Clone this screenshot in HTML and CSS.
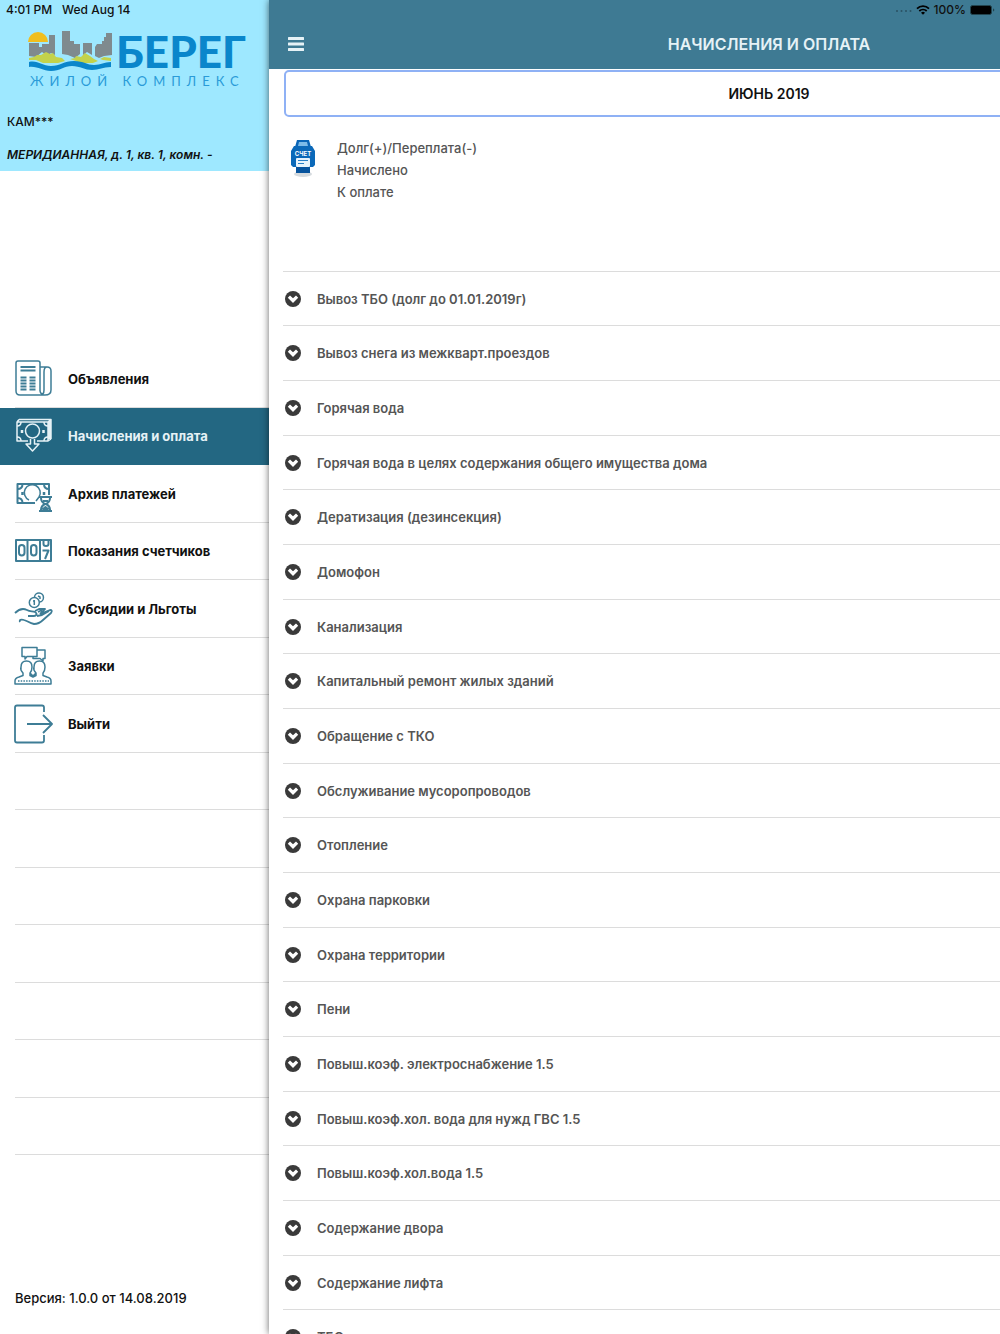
FILE: index.html
```html
<!DOCTYPE html>
<html lang="ru">
<head>
    <meta charset="UTF-8">
    <meta name="viewport" content="width=device-width, initial-scale=1.0">
    <title>Начисления и оплата</title>
    <link rel="stylesheet" href="styles.css">
</head>
<body>
    <!-- Icons used more than once -->
    <svg class="sprite" aria-hidden="true">
        <symbol id="chevron" viewBox="0 0 16 16">
            <circle cx="8" cy="8" r="8" fill="#3a3a3a"/>
            <path d="M2.8 6.8 5 4.6l3 2.600 3-2.600 2.200 2.200L8 12z" fill="#fff"/>
        </symbol>
    </svg>

    <div class="status-bar">
        <span class="status-time">4:01 PM</span>
        <span class="status-date">Wed Aug 14</span>
        <span class="status-right">
            <svg width="17" height="4" viewBox="0 0 17 4" fill="#2a5263">
                <circle cx="2" cy="3" r="1"/><circle cx="6.5" cy="3" r="1"/><circle cx="11" cy="3" r="1"/><circle cx="15.5" cy="3" r="1"/>
            </svg>
            <svg width="14" height="10" viewBox="0 0 14 10" fill="none" stroke="#000" stroke-width="1.8">
                <path d="M1 3.6a8.6 8.6 0 0 1 12 0M3.3 6a5.4 5.4 0 0 1 7.4 0"/>
                <path d="M5 7.7a3 3 0 0 1 4 0L7 9.8z" fill="#000" stroke="none"/>
            </svg>
            <span>100%</span>
            <svg width="25" height="10" viewBox="0 0 25 10">
                <rect x="0.5" y="0.5" width="21" height="9" rx="2" fill="#000" stroke="#23454f"/>
                <path d="M23 3.5v3q1.3-.4 1.3-1.5T23 3.500z" fill="#23454f"/>
            </svg>
        </span>
    </div>

    <div class="app">
        <aside class="sidebar">
            <div class="profile">
                <div class="logo">
                    <svg width="84" height="44" viewBox="0 0 84 44">
                        <path d="M1 13h10v4h3v-3h7V5h6v20l-4-2-4 3-5-4-6 5-7-1zM34 1h8v10h4v3h6v10l-5 4-7-3-6-1zM55 13h9v12l-5-3-4 3zM67 17l2-3h5v-3h2V7h2V3h6v22l-8 1-5 2-4-2z" fill="#7f8a8e"/>
                        <path d="M0 12a10 10 0 0 1 20 0z" fill="#f0be1e"/>
                        <path d="M1 28l5-1 3-2h4l5-3 4 2 3-1 3 4 6 1 3 3-7 2H15l-7-3H1zM42 29l5-1 1-2 5 1 4-4 5 3 4 3 4 2-5 2H52l-4-2zM72 29l4-2 7 1v3l-8-1z" fill="#c3d24b"/>
                        <path d="M1 32c9-2 13 4 22 4s13-5 23-5 13 4 20 4 10-3 17-3v5c-8 0-12 3-19 3s-12-4-20-4-12 5-21 5-13-5-22-4z" fill="#0a86cb"/>
                    </svg>
                    <span class="logo-name">БЕРЕГ</span>
                    <span class="logo-tagline">ЖИЛОЙ КОМПЛЕКС</span>
                </div>
                <p class="profile-name">КАМ***</p>
                <p class="profile-address">МЕРИДИАННАЯ, д. 1, кв. 1, комн. -</p>
            </div>

            <nav>
                <ul class="menu">
                    <li>
                        <a href="#news">
                            <svg class="menu-icon" viewBox="0 0 40 40">
                                <path d="M27 32V4q0-2-2-2H5Q3 2 3 4v28q0 4 4 4h25q6 0 6-5V12q0-4-4-4h-7M34 8q-3 0-3 5v18q0 5-4 5M27 31q0 4 3 4"/>
                                <path d="M7.5 8h15M7.5 11.5h15" stroke-width="2"/>
                                <path d="M7.5 18.5h6M7.5 21.5h6M7.5 24.5h6M7.5 27.5h6M7.5 30.5h6M16.5 18.5h6M16.5 21.5h6M16.5 24.5h6M16.5 27.5h6M16.5 30.5h6" stroke-width="1.8"/>
                            </svg>
                            <span>Объявления</span>
                        </a>
                    </li>
                    <li class="active">
                        <a href="#charges">
                            <svg class="menu-icon" viewBox="0 0 40 40">
                                <path d="M15 25H4V6h31v19H24M6 3.5h32V23M4 6l2-2.5M35 6l3-2.5M36.5 5v18M35 25l3-2"/>
                                <circle cx="19.5" cy="15" r="7"/>
                                <path d="M4 10q4 0 4-4M35 10q-4 0-4-4M4 21q4 0 4 4M35 21q-4 0-4 4M17.5 23v5H13l6.5 7 6.5-7h-4.5v-5"/>
                                <path d="M9 14v3M30.5 14v3" stroke-width="2.5"/>
                            </svg>
                            <span>Начисления и оплата</span>
                        </a>
                    </li>
                    <li>
                        <a href="#archive">
                            <svg class="menu-icon" viewBox="0 0 40 40">
                                <path d="M22 29H4.500V10H36v11" stroke-width="2"/>
                                <path d="M16 26a8 8 0 1 1 10-3l-3 4"/>
                                <path d="M4.500 15q5 0 5-5M36 15q-5 0-5-5M4.500 24q5 0 5 5" stroke-width="2"/>
                                <path d="M9.5 18v3M31 18v3" stroke-width="2.5"/>
                                <path d="M26 23h13M26 37h13M28 24q0 4 4 6-4 2-4 6M37 24q0 4-4 6 4 2 4 6M30 27h5M30 35l2.5-2 2.5 2z" stroke-width="2"/>
                            </svg>
                            <span>Архив платежей</span>
                        </a>
                    </li>
                    <li>
                        <a href="#meters">
                            <svg class="menu-icon" viewBox="0 0 40 40">
                                <path d="M3 9h35v21H3zM14.5 9v21M27 9v21" stroke-width="2"/>
                                <rect x="6" y="14" width="5.5" height="10.5" rx="2.7" stroke-width="2"/>
                                <rect x="18" y="14" width="5.5" height="10.5" rx="2.7" stroke-width="2"/>
                                <path d="M30.5 10v3q0 2 2.500 2t2.500-2v-3M29.5 19.500h6L32 28" stroke-width="2"/>
                            </svg>
                            <span>Показания счетчиков</span>
                        </a>
                    </li>
                    <li>
                        <a href="#benefits">
                            <svg class="menu-icon" viewBox="0 0 40 40">
                                <circle cx="21.3" cy="13.5" r="5"/>
                                <path d="M21.5 8a4.500 4.500 0 1 1 5 5M21.3 11v5M20 12h1.300M25 7l2 1v2"/>
                                <path d="M2 24c4-4 8-5 12-3 3 2 5 1 8 2 3 2 1 4-1 4h-6M22 22l4-2h6l-5 5M27 25l10-4q3 0 1 3l-8 7q-4 4-9 4c-5-1-6-3-10-4-3-1-5 0-4 2M24 27l5-1 7-4M25 23l4-2" stroke-width="1.800"/>
                            </svg>
                            <span>Субсидии и Льготы</span>
                        </a>
                    </li>
                    <li>
                        <a href="#requests">
                            <svg class="menu-icon" viewBox="0 0 40 40">
                                <path d="M9 1.500h15v9H14l-2 2.500v-2.500H9zM24 4h8v8.500h-2v2.500l-3-2.500h-7V10"/>
                                <path d="M2 38v-3q0-3 4-4l4-1.500V27q-3-3-2-6 0-6 5.500-6t5.500 6q0 4-2 6v2.500l3 1.500 3-1.500V27q-3-3-2-6 0-6 5.500-6t5.500 6q0 4-2 6v2.500l4 1.500q4 1 4 4v3zM17 27l3 3 3-3"/>
                                <path d="M5 35h31" stroke-dasharray="1.5 1.2"/>
                            </svg>
                            <span>Заявки</span>
                        </a>
                    </li>
                    <li>
                        <a href="#logout">
                            <svg class="menu-icon" viewBox="0 0 40 40">
                                <path d="M31 8V3.500Q31 1.500 29 1.500H4Q2 1.500 2 3.500v33q0 2 2 2h25q2 0 2-2V31M14 20h25M30 11l9 9-9 9" stroke-width="1.8"/>
                            </svg>
                            <span>Выйти</span>
                        </a>
                    </li>
                    <li></li>
                    <li></li>
                    <li></li>
                    <li></li>
                    <li></li>
                    <li></li>
                    <li></li>
                </ul>
            </nav>

            <p class="version">Версия: 1.0.0 от 14.08.2019</p>
        </aside>

        <main class="page">
            <header class="page-header">
                <button class="menu-button" type="button" aria-label="Меню">
                    <svg width="16" height="14" viewBox="0 0 16 14" fill="#e6f2f6">
                        <rect width="16" height="3" rx="0.5"/><rect y="5.5" width="16" height="3" rx="0.5"/><rect y="11" width="16" height="3" rx="0.5"/>
                    </svg>
                </button>
                <h1>НАЧИСЛЕНИЯ И ОПЛАТА</h1>
            </header>

            <button class="month" type="button">ИЮНЬ 2019</button>

            <section class="summary">
                <svg width="26" height="40" viewBox="0 0 26 40">
                    <ellipse cx="13" cy="37" rx="9" ry="3" fill="#d5dade"/>
                    <path d="M7 3h12l2 7H5z" fill="#0a66b8"/>
                    <path d="M9 5h8l1 4H8z" fill="#7dbbe8"/>
                    <path d="M4 9h18l3 5v14l-2 2H3l-2-2V14z" fill="#0b69b9"/>
                    <path d="M6 28h14v8H6z" fill="#07539d"/>
                    <rect x="6" y="21" width="14" height="9" rx="1" fill="#e8f3fb"/>
                    <path d="M8 23.5h10M8 26.5h6" stroke="#2a7fc5"/>
                    <text class="bill-label" x="13" y="19" text-anchor="middle">СЧЕТ</text>
                </svg>
                <ul class="totals">
                    <li>Долг(+)/Переплата(-)</li>
                    <li>Начислено</li>
                    <li>К оплате</li>
                </ul>
            </section>

            <ul class="services">
                <li><button type="button"><svg><use href="#chevron"/></svg>Вывоз ТБО (долг до 01.01.2019г)</button></li>
                <li><button type="button"><svg><use href="#chevron"/></svg>Вывоз снега из межкварт.проездов</button></li>
                <li><button type="button"><svg><use href="#chevron"/></svg>Горячая вода</button></li>
                <li><button type="button"><svg><use href="#chevron"/></svg>Горячая вода в целях содержания общего имущества дома</button></li>
                <li><button type="button"><svg><use href="#chevron"/></svg>Дератизация (дезинсекция)</button></li>
                <li><button type="button"><svg><use href="#chevron"/></svg>Домофон</button></li>
                <li><button type="button"><svg><use href="#chevron"/></svg>Канализация</button></li>
                <li><button type="button"><svg><use href="#chevron"/></svg>Капитальный ремонт жилых зданий</button></li>
                <li><button type="button"><svg><use href="#chevron"/></svg>Обращение с ТКО</button></li>
                <li><button type="button"><svg><use href="#chevron"/></svg>Обслуживание мусоропроводов</button></li>
                <li><button type="button"><svg><use href="#chevron"/></svg>Отопление</button></li>
                <li><button type="button"><svg><use href="#chevron"/></svg>Охрана парковки</button></li>
                <li><button type="button"><svg><use href="#chevron"/></svg>Охрана территории</button></li>
                <li><button type="button"><svg><use href="#chevron"/></svg>Пени</button></li>
                <li><button type="button"><svg><use href="#chevron"/></svg>Повыш.коэф. электроснабжение 1.5</button></li>
                <li><button type="button"><svg><use href="#chevron"/></svg>Повыш.коэф.хол. вода для нужд ГВС 1.5</button></li>
                <li><button type="button"><svg><use href="#chevron"/></svg>Повыш.коэф.хол.вода 1.5</button></li>
                <li><button type="button"><svg><use href="#chevron"/></svg>Содержание двора</button></li>
                <li><button type="button"><svg><use href="#chevron"/></svg>Содержание лифта</button></li>
                <li><button type="button"><svg><use href="#chevron"/></svg>ТБО</button></li>
            </ul>
        </main>
    </div>
</body>
</html>
```
FILE: styles.css
```css
* {
    box-sizing: border-box;
}
body {
    margin: 0;
    font-family: Inter, "Noto Sans", sans-serif;
    font-size: 13px;
    color: #111;
    background: #fff;
}
ul {
    list-style: none;
    margin: 0;
    padding: 0;
}
p, h1 {
    margin: 0;
}
button {
    font: inherit;
    color: inherit;
    background: none;
    border: 0;
    padding: 0;
    cursor: pointer;
}
svg {
    flex: none;
}
.sprite {
    position: absolute;
    width: 0;
    height: 0;
}

/* Status bar lies over both panels */
.status-bar {
    position: absolute;
    top: 0;
    left: 0;
    right: 0;
    z-index: 2;
    display: flex;
    gap: 10px;
    height: 19px;
    padding: 0 5px 0 6px;
    align-items: center;
    font-size: 12px;
    font-weight: 500;
}
.status-right {
    display: flex;
    align-items: center;
    gap: 4px;
    margin-left: auto;
}

/* The page keeps the full window width and is pushed aside by the menu */
.app {
    display: flex;
    height: 100vh;
    overflow: hidden;
}
.sidebar {
    flex: 0 0 269px;
    display: flex;
    flex-direction: column;
}
.page {
    position: relative;
    flex: 0 0 100vw;
    background: #fff;
    box-shadow: 0 0 7px rgba(0, 0, 0, 0.6);
}

.profile {
    height: 171px;
    padding: 30px 7px 0;
    background: #9ee8ff;
}
.logo {
    display: grid;
    grid-template-columns: 84px auto;
    justify-content: start;
    align-content: start;
    column-gap: 4px;
    padding-left: 21px;
    height: 84px;
}
.logo-name {
    font-family: Lato, sans-serif;
    font-size: 44px;
    font-weight: 900;
    line-height: 42px;
    color: #0a86cb;
}
.logo-tagline {
    grid-column: 1 / 3;
    padding-left: 2px;
    font-family: Lato, sans-serif;
    font-size: 13px;
    line-height: 14px;
    letter-spacing: 6px;
    white-space: nowrap;
    color: #2a9bd8;
}
.profile-name {
    font-size: 12px;
    font-weight: 500;
    line-height: 16px;
}
.profile-address {
    margin-top: 17px;
    font-size: 12px;
    font-weight: 600;
    font-style: italic;
    line-height: 16px;
    white-space: nowrap;
}

.menu {
    margin-top: 179px;
}
.menu li {
    height: 58px;
    margin-left: 15px;
    border-bottom: 1px solid #dcdcdc;
}
.menu li:nth-child(even) {
    height: 57px;
}
.menu a {
    display: flex;
    align-items: center;
    gap: 15px;
    height: 100%;
    margin-left: -15px;
    padding-left: 13px;
    font-size: 13px;
    font-weight: 700;
    color: #111;
    text-decoration: none;
}
.menu .active {
    margin-left: 0;
    border-color: #236782;
}
.menu .active a {
    margin-left: 0;
    background: #236782;
    color: #e6f2f6;
}
.menu-icon {
    width: 40px;
    height: 40px;
    fill: none;
    stroke: #3e7d96;
    stroke-width: 1.5;
    stroke-linejoin: round;
}
.menu .active .menu-icon {
    stroke: #e6f2f6;
}
.version {
    margin: auto 0 27px 15px;
    font-weight: 500;
    line-height: 18px;
}

.page-header {
    display: grid;
    grid-template-columns: 40px 1fr 40px;
    align-items: center;
    height: 69px;
    padding: 18px 14px 0;
    background: #3e7a93;
    color: #e6f2f6;
}
.menu-button {
    display: flex;
    padding: 5px;
}
.page-header h1 {
    font-size: 16px;
    font-weight: 600;
    text-align: center;
}
.month {
    display: block;
    width: calc(100% - 30px);
    height: 47px;
    margin: 1px 15px 0;
    border: 2px solid #8fb1f5;
    border-radius: 5px;
    font-size: 14px;
    font-weight: 600;
}
.summary {
    display: flex;
    gap: 21px;
    height: 154px;
    padding: 20px 21px 0;
}
.bill-label {
    font-size: 6px;
    font-weight: 700;
    fill: #fff;
}
.totals {
    font-weight: 500;
    line-height: 22px;
    color: #555;
}
.services {
    margin-left: 14px;
    border-top: 1px solid #dcdcdc;
    color: #555;
}
.services li {
    height: 55px;
    border-bottom: 1px solid #dcdcdc;
}
.services li:nth-child(3n+1) {
    height: 54px;
}
.services button {
    display: flex;
    align-items: center;
    gap: 16px;
    width: 100%;
    height: 100%;
    padding-left: 2px;
    font-weight: 600;
    text-align: left;
}
.services svg {
    width: 16px;
    height: 16px;
}
```
